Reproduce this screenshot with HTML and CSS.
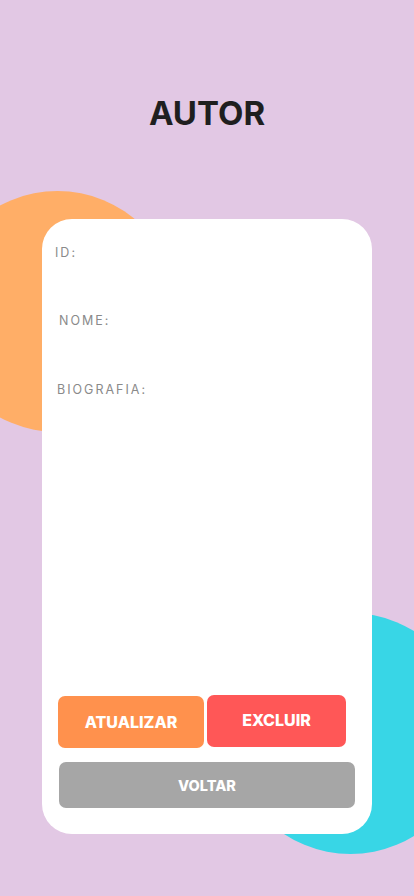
FILE: index.html
```html
<!DOCTYPE html>
<html lang="pt">
<head>
<meta charset="utf-8">
<title>Autor</title>
<link rel="stylesheet" href="styles.css">
</head>
<body>
<div class="page">
  <div class="blob blob-orange"></div>
  <div class="blob blob-cyan"></div>
  <h1 class="title">AUTOR</h1>
  <div class="card">
    <div class="field field-id">ID:</div>
    <div class="field field-nome">NOME:</div>
    <div class="field field-bio">BIOGRAFIA:</div>
    <div class="actions">
      <div class="row">
        <button class="btn btn-update">ATUALIZAR</button>
        <button class="btn btn-delete">EXCLUIR</button>
      </div>
      <button class="btn btn-back">VOLTAR</button>
    </div>
  </div>
</div>
</body>
</html>
```
FILE: styles.css
```css
* { box-sizing: border-box; }
html, body { margin: 0; padding: 0; }
body {
  background: #E2C8E4;
  font-family: Inter, "Noto Sans", sans-serif;
}
.page {
  position: relative;
  width: 414px;
  height: 896px;
  overflow: hidden;
  padding-top: 93px;
}
.blob {
  position: absolute;
  width: 241px;
  height: 241px;
  border-radius: 50%;
  z-index: 0;
}
.blob-orange { left: -63px; top: 191px; background: #FFAE67; }
.blob-cyan { left: 230px; top: 613px; background: #38D6E6; }
.title {
  position: relative;
  z-index: 1;
  margin: 0;
  text-align: center;
  font-size: 33px;
  line-height: 40px;
  font-weight: 700;
  color: #1F1F1F;
}
.card {
  position: relative;
  z-index: 1;
  margin: 86px auto 0;
  width: 330px;
  height: 615px;
  background: #fff;
  border-radius: 30px;
  padding-top: 26px;
  padding-bottom: 26px;
  display: flex;
  flex-direction: column;
}
.field {
  font-size: 12.5px;
  line-height: 16px;
  letter-spacing: 2px;
  color: #8A8A8A;
}
.field-id { padding-left: 13px; }
.field-nome { padding-left: 17px; margin-top: 52px; }
.field-bio { padding-left: 15px; margin-top: 53px; }
.actions {
  margin-top: auto;
  padding-left: 16px;
  display: flex;
  flex-direction: column;
  align-items: flex-start;
}
.row {
  display: flex;
  align-items: flex-start;
  gap: 3px;
}
.btn {
  border: none;
  border-radius: 7px;
  color: #fff;
  font-family: Inter, "Noto Sans", sans-serif;
  font-weight: 800;
  font-size: 16px;
  padding: 0;
  display: flex;
  align-items: center;
  justify-content: center;
}
.btn-update {
  width: 146px;
  height: 52px;
  margin-top: 1px;
  background: #FF914D;
}
.btn-delete {
  width: 139px;
  height: 52px;
  background: #FF5757;
  padding-bottom: 2px;
}
.btn-back {
  width: 296px;
  height: 46px;
  margin-top: 14px;
  margin-left: 1px;
  background: #A6A6A6;
  font-size: 14.5px;
}
```
